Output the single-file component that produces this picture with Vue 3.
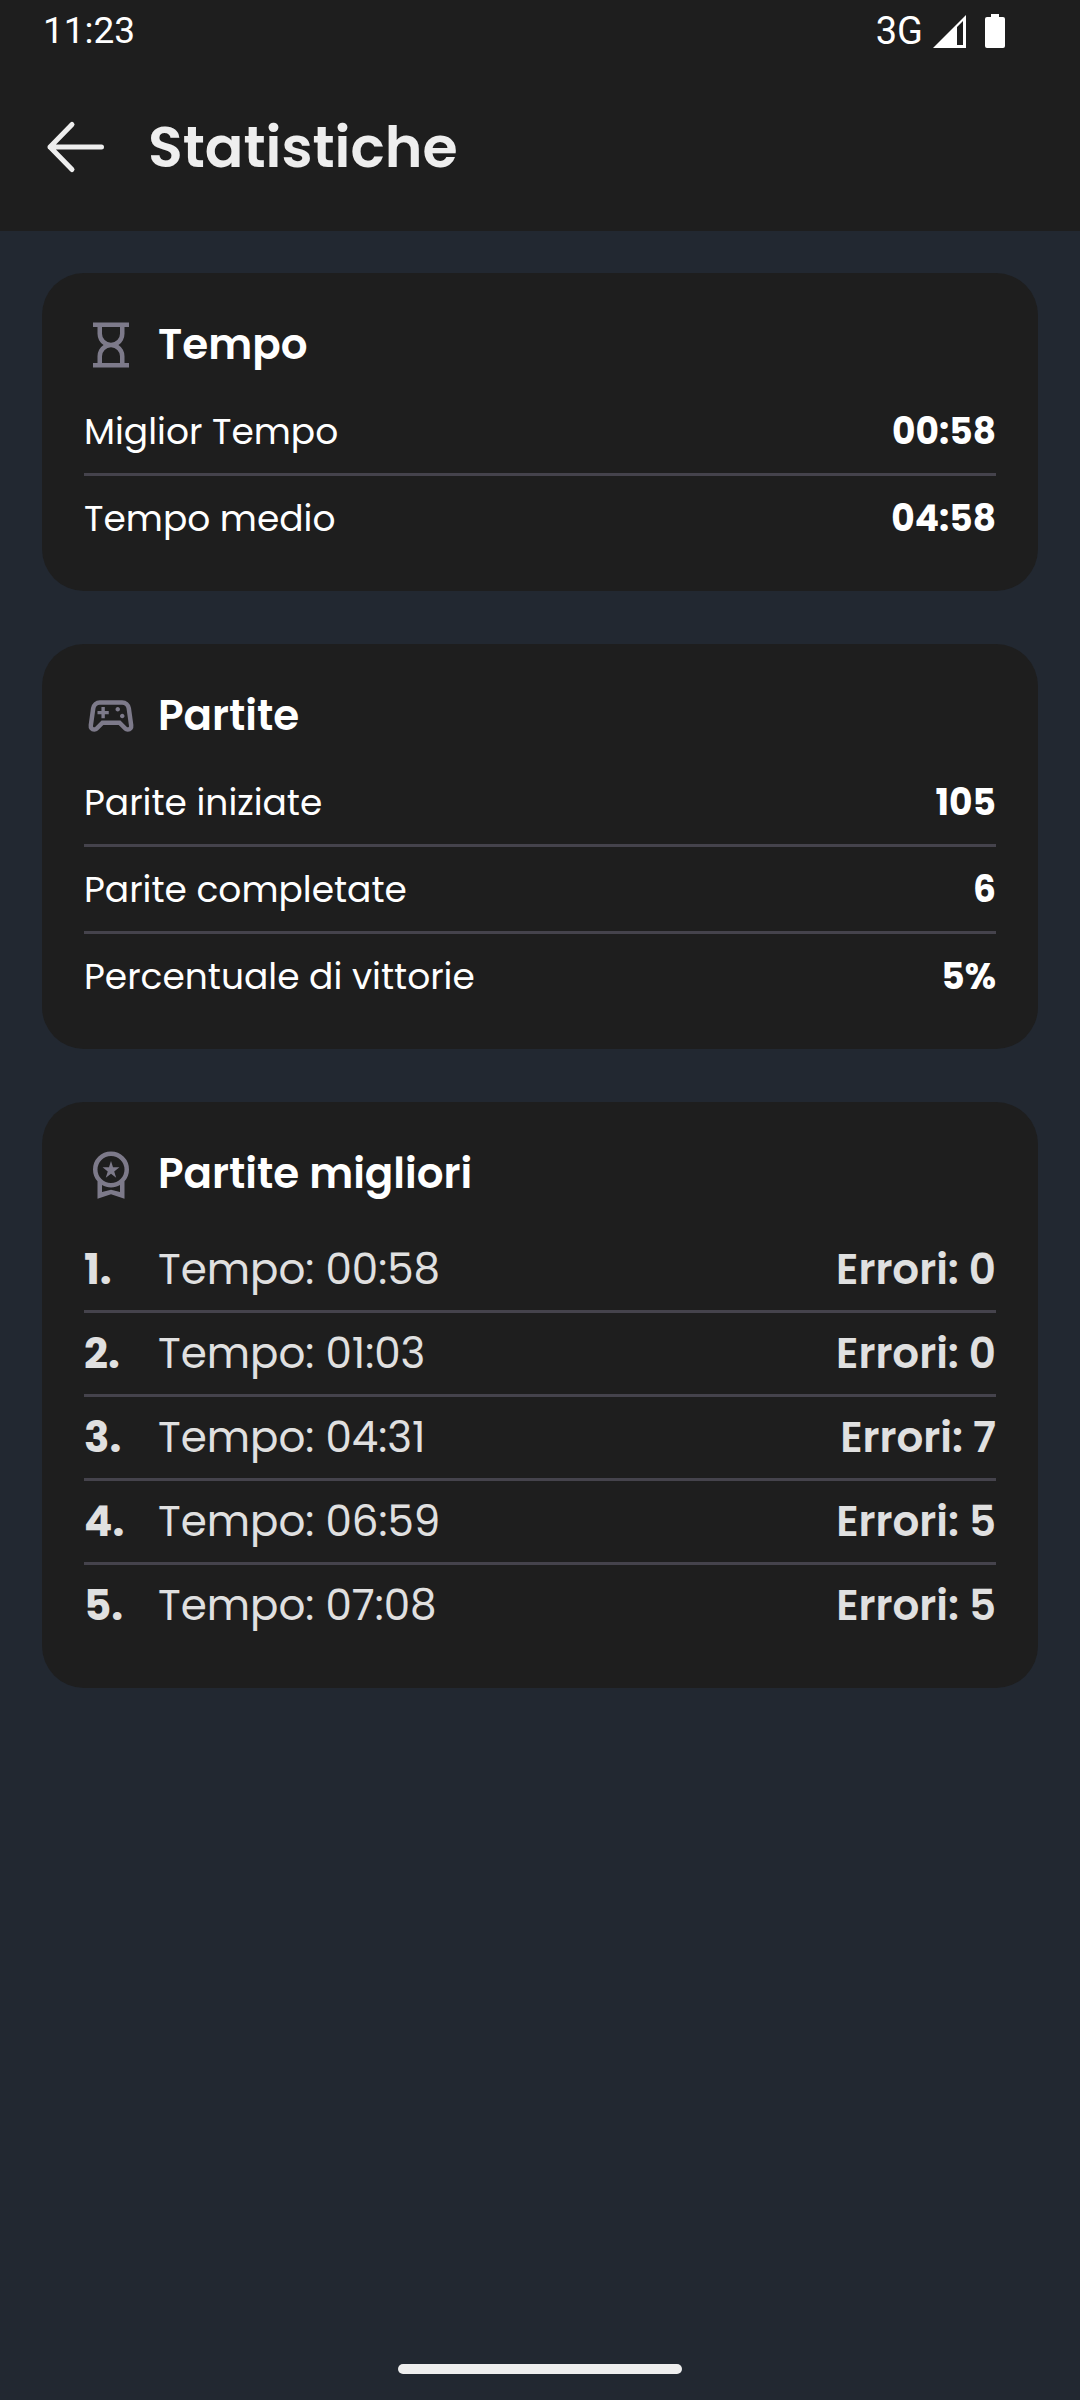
<script setup>
const sections = [
  {
    title: 'Tempo',
    icon: 'M320-160h320v-120q0-66-47-113t-113-47q-66 0-113 47t-47 113v120Zm160-360q66 0 113-47t47-113v-120H320v120q0 66 47 113t113 47ZM160-80v-80h80v-120q0-61 28.5-114.5T348-480q-51-32-79.5-85.5T240-680v-120h-80v-80h640v80h-80v120q0 61-28.5 114.5T612-480q51 32 79.5 85.5T720-280v120h80v80H160Z',
    rows: [
      { label: 'Miglior Tempo', value: '00:58' },
      { label: 'Tempo medio', value: '04:58' },
    ],
  },
  {
    title: 'Partite',
    icon: 'M182-200q-51 0-79-35.5T82-322l42-300q9-60 53.5-99T282-760h396q60 0 104.5 39t53.5 99l42 300q7 51-21 86.5T778-200q-21 0-39-7.5T706-230l-90-90H344l-90 90q-15 15-33 22.5t-39 7.5Zm16-86 114-114h336l114 114q2 2 16 6 11 0 17.5-6.5T800-304l-44-308q-4-29-26-48.5T678-680H282q-30 0-52 19.5T204-612l-44 308q-2 11 4.5 17.5T182-280q2 0 16-6Zm482-154q17 0 28.5-11.5T720-480q0-17-11.5-28.5T680-520q-17 0-28.5 11.5T640-480q0 17 11.5 28.5T680-440Zm-80-120q17 0 28.5-11.5T640-600q0-17-11.5-28.5T600-640q-17 0-28.5 11.5T560-600q0 17 11.5 28.5T600-560ZM310-440h60v-70h70v-60h-70v-70h-60v70h-70v60h70v70Z',
    rows: [
      { label: 'Parite iniziate', value: '105' },
      { label: 'Parite completate', value: '6' },
      { label: 'Percentuale di vittorie', value: '5%' },
    ],
  },
]

const medalIcon =
  'M387-412l35-114-92-74h114l36-112 36 112h114l-93 74 35 114-92-71-93 71ZM240-40v-309q-38-42-59-96t-21-115q0-134 93-227t227-93q134 0 227 93t93 227q0 61-21 115t-59 96v309l-240-80-240 80Zm410-350q70-70 70-170t-70-170q-70-70-170-70t-170 70q-70 70-70 170t70 170q70 70 170 70t170-70ZM320-159l160-41 160 41v-124q-35 20-75.5 31.5T480-240q-44 0-84.5-11.5T320-283v124Z'

const bestGames = [
  { time: '00:58', errors: 0 },
  { time: '01:03', errors: 0 },
  { time: '04:31', errors: 7 },
  { time: '06:59', errors: 5 },
  { time: '07:08', errors: 5 },
]
</script>

<template>
  <div class="screen">
    <header class="header">
      <div class="status">
        <span>11:23</span>
        <div class="status-right">
          <span class="network">3G</span>
          <svg class="signal" viewBox="0 0 33 33" aria-hidden="true">
            <path fill-rule="evenodd" d="M0 33 33 0V33ZM24 12V30H30V6Z" />
          </svg>
          <svg class="battery" viewBox="0 0 20 34" aria-hidden="true">
            <path d="M6 0H14V3H18Q20 3 20 5V32Q20 34 18 34H2Q0 34 0 32V5Q0 3 2 3H6Z" />
          </svg>
        </div>
      </div>
      <div class="app-bar">
        <button class="back" type="button" aria-label="Indietro">
          <svg viewBox="0 0 63 63" aria-hidden="true">
            <path d="M30 9.500 8 32 30 54.500M8 32H59.500" />
          </svg>
        </button>
        <h1>Statistiche</h1>
      </div>
    </header>

    <main class="content">
      <section v-for="section in sections" :key="section.title" class="card">
        <h2>
          <svg class="icon" viewBox="0 -960 960 960" aria-hidden="true">
            <path :d="section.icon" />
          </svg>
          {{ section.title }}
        </h2>
        <dl class="stats">
          <div v-for="row in section.rows" :key="row.label" class="stat">
            <dt>{{ row.label }}</dt>
            <dd>{{ row.value }}</dd>
          </div>
        </dl>
      </section>

      <section class="card">
        <h2>
          <svg class="icon" viewBox="0 -960 960 960" aria-hidden="true">
            <path :d="medalIcon" />
          </svg>
          Partite migliori
        </h2>
        <ol class="ranking">
          <li v-for="(game, index) in bestGames" :key="index">
            <span class="rank">{{ index + 1 }}.</span>
            <span class="time">Tempo: {{ game.time }}</span>
            <span class="errors">Errori: {{ game.errors }}</span>
          </li>
        </ol>
      </section>
    </main>

    <footer class="nav"><div class="handle"></div></footer>
  </div>
</template>

<style>
body {
  margin: 0;
  background: #222831;
}
</style>

<style scoped>
.screen {
  min-height: 100vh;
  display: flex;
  flex-direction: column;
  background: #222831;
  color: #fff;
  font-family: Poppins, Inter, sans-serif;
}
.header {
  background: #1e1e1e;
}
.status {
  height: 62px;
  padding: 0 75px 0 43px;
  display: flex;
  align-items: center;
  justify-content: space-between;
  font: 400 37px/60px Roboto, sans-serif;
}
.status-right {
  display: flex;
  align-items: center;
}
.network {
  font-size: 38px;
}
.status svg {
  fill: #fff;
}
.signal {
  width: 33px;
  height: 33px;
  margin: 0 19px 0 10px;
}
.battery {
  width: 20px;
  height: 34px;
}
.app-bar {
  height: 169px;
  padding: 0 42px;
  display: flex;
  align-items: center;
  gap: 43px;
}
.back {
  width: 63px;
  height: 63px;
  padding: 0;
  border: 0;
  background: none;
}
.back svg {
  display: block;
  fill: none;
  stroke: #eee;
  stroke-width: 5;
  stroke-linecap: round;
  stroke-linejoin: round;
}
h1 {
  margin: 0;
  color: #eee;
  font-size: 57px;
  font-weight: 600;
  line-height: 84px;
}
.content {
  flex: 1;
  padding: 42px;
  display: flex;
  flex-direction: column;
  gap: 53px;
}
.card {
  padding: 42px 42px 31px;
  border-radius: 42px;
  background: #1e1e1e;
}
h2 {
  margin: 0 0 14px;
  display: flex;
  align-items: center;
  gap: 20px;
  font-size: 42px;
  font-weight: 600;
  line-height: 60px;
}
.icon {
  width: 54px;
  height: 54px;
  fill: #7d7a8a;
}
.stats,
.ranking {
  margin: 0;
  padding: 0;
  list-style: none;
}
.stat {
  display: flex;
  justify-content: space-between;
  padding-top: 2px;
  font-size: 36px;
  line-height: 82px;
}
.stat + .stat,
.ranking li + li {
  border-top: 3px solid #45434c;
}
dd {
  margin: 0;
  font-weight: 700;
}
.ranking {
  padding: 11px 0;
}
.ranking li {
  display: flex;
  color: #e0e0e0;
  font-size: 42px;
  line-height: 81px;
}
.rank {
  width: 74px;
  font-weight: 700;
}
.time {
  flex: 1;
}
.errors {
  font-weight: 600;
}
.nav {
  padding: 26px;
  display: flex;
  justify-content: center;
}
.handle {
  width: 284px;
  height: 10px;
  border-radius: 5px;
  background: #eee;
}
</style>
